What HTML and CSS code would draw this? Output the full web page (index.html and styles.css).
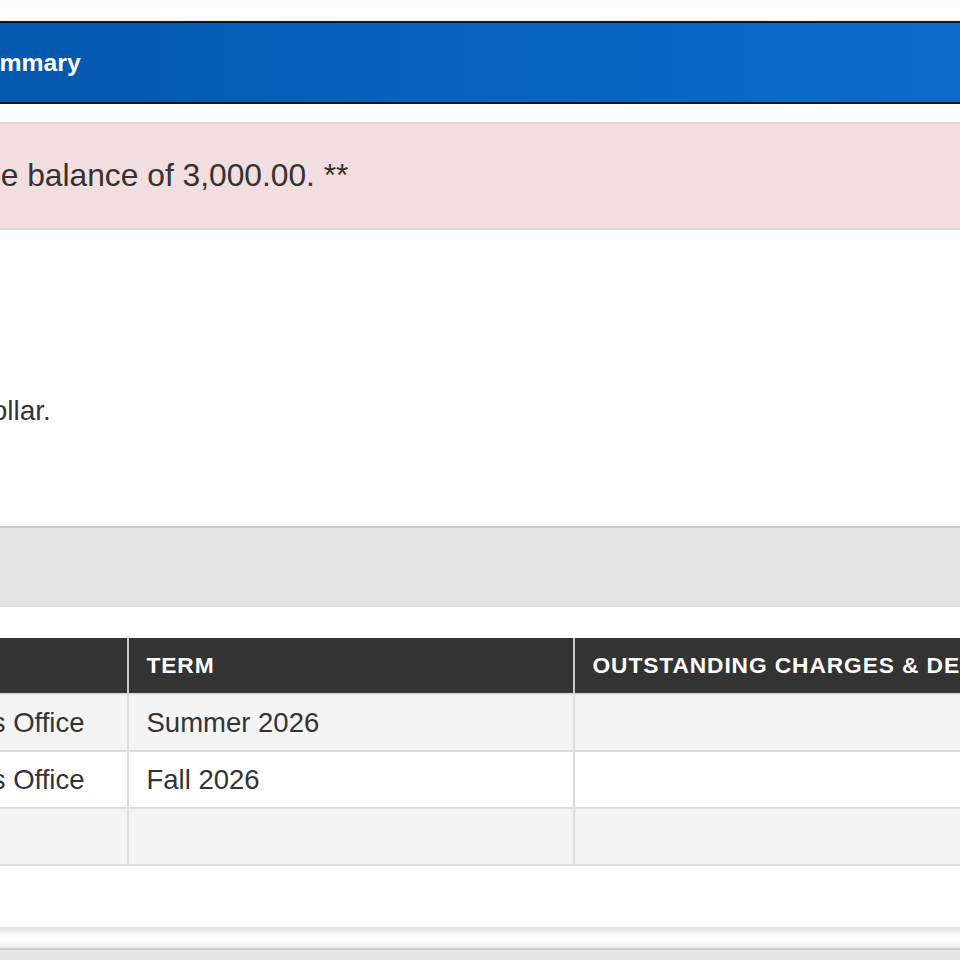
FILE: index.html
```html
<!DOCTYPE html>
<html lang="en">
<head>
<meta charset="utf-8">
<title>Account Summary</title>
<link rel="stylesheet" href="styles.css">
</head>
<body>
<div class="page">
  <div class="card card-prev"></div>

  <section class="card">
    <h2 class="card-header">Account Summary</h2>
    <div class="card-body">
      <div class="alert">** Past due balance of 3,000.00. **</div>
      <p class="note">Amounts are rounded to the nearest dollar.</p>

      <div class="panel-bar"></div>

      <table class="charges">
        <colgroup>
          <col class="col-office">
          <col class="col-term">
          <col class="col-amount">
        </colgroup>
        <thead>
          <tr>
            <th>Office</th>
            <th>Term</th>
            <th>Outstanding Charges &amp; Deposits</th>
          </tr>
        </thead>
        <tbody>
          <tr><td>Bursar's Office</td><td>Summer 2026</td><td></td></tr>
          <tr><td>Bursar's Office</td><td>Fall 2026</td><td></td></tr>
          <tr><td></td><td></td><td></td></tr>
        </tbody>
      </table>
    </div>
  </section>

  <section class="card card-next">
    <div class="panel-bar"></div>
  </section>
</div>
</body>
</html>
```

FILE: styles.css
```css
html, body {
  margin: 0;
  padding: 0;
  background: #ffffff;
  overflow: hidden;
}

body {
  font-family: "Liberation Sans", Arial, sans-serif;
  color: #333333;
}

.page {
  margin-left: -160px;
  width: 1400px;
}

.card {
  background: #ffffff;
  margin-top: 21px;
  box-shadow: 0 3px 9px rgba(0, 0, 0, 0.16);
}

/* bottom edge of the card above */
.card-prev {
  height: 1px;
  margin-top: -1px;
  box-shadow: 0 3px 12px rgba(0, 0, 0, 0.22);
}

.card-header {
  margin: 0;
  height: 79px;
  display: flex;
  align-items: center;
  padding-left: 22px;
  border-top: 2px solid #151515;
  border-bottom: 2px solid #151515;
  background: linear-gradient(90deg, #0154a9 0%, #0a66c4 60%, #0e70d1 100%);
  color: #ffffff;
  font-size: 24.75px;
  font-weight: bold;
}

.card-body {
  padding: 18px 0 61px;
}

.alert {
  background: #f2dede;
  border: 2px solid #efcdd2;
  padding: 29px 17.5px 30px;
  font-size: 31.75px;
  line-height: 45px;
  color: #333333;
  white-space: nowrap;
}

.note {
  margin: 161px 0 95px -320px;
  font-size: 28px;
  line-height: 40px;
  white-space: nowrap;
}

.panel-bar {
  height: 78px;
  background: #e6e6e6;
  border-top: 2px solid #cbcbcb;
  border-bottom: 1px solid #d4d4d4;
}

.charges {
  margin: 31px 0 0 48px;
  border-collapse: collapse;
  table-layout: fixed;
  width: 1286px;
}

.col-office { width: 240px; }
.col-term { width: 446px; }
.col-amount { width: 600px; }

.charges th {
  height: 55px;
  padding: 0 17.5px;
  background: #333333;
  color: #ffffff;
  font-size: 22.75px;
  font-weight: bold;
  letter-spacing: 0.9px;
  text-transform: uppercase;
  text-align: left;
  white-space: nowrap;
  border-right: 2px solid #c9c9c9;
  border-bottom: 2px solid #dddddd;
}

.charges th:last-child {
  border-right: none;
}

.charges td {
  height: 55px;
  padding: 0 17.5px;
  font-size: 27.5px;
  line-height: 40px;
  color: #333333;
  white-space: nowrap;
  border-right: 2px solid #dddddd;
  border-bottom: 2px solid #dddddd;
}

.charges td:last-child {
  border-right: none;
}

.charges tbody tr:nth-child(odd) td {
  background: #f4f4f4;
}

.charges tbody tr:nth-child(even) td {
  background: #ffffff;
}

.card-next {
  margin-top: 21px;
  height: 200px;
  box-shadow: 0 -2px 8px rgba(0, 0, 0, 0.12);
}
```
